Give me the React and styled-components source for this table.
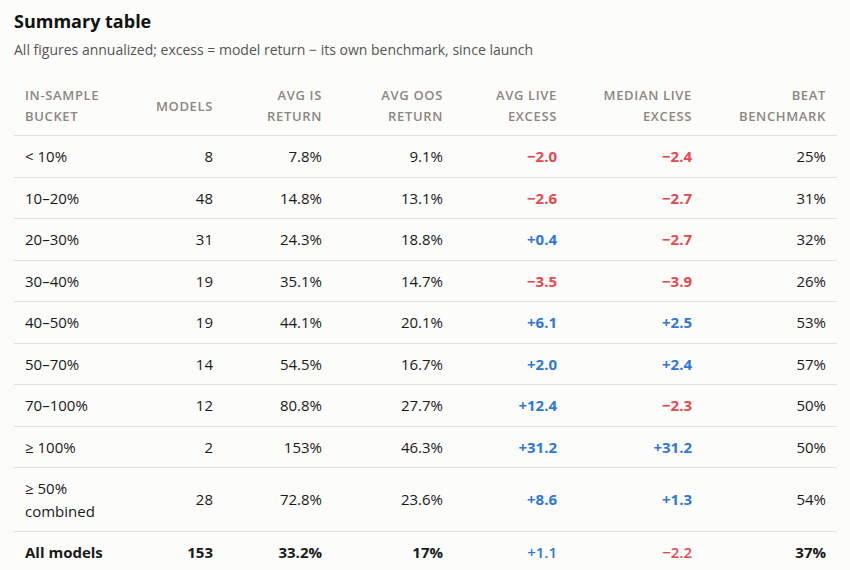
import React from 'react';
import styled, { createGlobalStyle } from 'styled-components';

const GlobalStyle = createGlobalStyle`
  html, body {
    margin: 0;
    padding: 0;
    background: #fcfcfa;
  }
  body {
    font-family: 'Open Sans', 'Noto Sans', sans-serif;
    color: #1a1a1a;
  }
`;

const rows = [
  { bucket: '< 10%', models: 8, is: '7.8%', oos: '9.1%', avg: '−2.0', med: '−2.4', beat: '25%' },
  { bucket: '10–20%', models: 48, is: '14.8%', oos: '13.1%', avg: '−2.6', med: '−2.7', beat: '31%' },
  { bucket: '20–30%', models: 31, is: '24.3%', oos: '18.8%', avg: '+0.4', med: '−2.7', beat: '32%' },
  { bucket: '30–40%', models: 19, is: '35.1%', oos: '14.7%', avg: '−3.5', med: '−3.9', beat: '26%' },
  { bucket: '40–50%', models: 19, is: '44.1%', oos: '20.1%', avg: '+6.1', med: '+2.5', beat: '53%' },
  { bucket: '50–70%', models: 14, is: '54.5%', oos: '16.7%', avg: '+2.0', med: '+2.4', beat: '57%' },
  { bucket: '70–100%', models: 12, is: '80.8%', oos: '27.7%', avg: '+12.4', med: '−2.3', beat: '50%' },
  { bucket: '≥ 100%', models: 2, is: '153%', oos: '46.3%', avg: '+31.2', med: '+31.2', beat: '50%' },
  { bucket: '≥ 50% combined', models: 28, is: '72.8%', oos: '23.6%', avg: '+8.6', med: '+1.3', beat: '54%' },
];

const total = { bucket: 'All models', models: 153, is: '33.2%', oos: '17%', avg: '+1.1', med: '−2.2', beat: '37%' };

const widths = [122, 88, 109, 121, 114, 135, 134];

const headers = [
  ['IN-SAMPLE', 'BUCKET'],
  ['MODELS'],
  ['AVG IS', 'RETURN'],
  ['AVG OOS', 'RETURN'],
  ['AVG LIVE', 'EXCESS'],
  ['MEDIAN LIVE', 'EXCESS'],
  ['BEAT', 'BENCHMARK'],
];

const Signed = ({ value, strong }) => (
  <Delta $neg={value.startsWith('−')} $strong={strong}>
    {value}
  </Delta>
);

export default function App() {
  return (
    <Page>
      <GlobalStyle />
      <Title>Summary table</Title>
      <Subtitle>
        All figures annualized; excess = model return − its own benchmark, since launch
      </Subtitle>
      <Table>
        <colgroup>
          {widths.map((w, i) => (
            <col key={i} style={{ width: w }} />
          ))}
        </colgroup>
        <thead>
          <tr>
            {headers.map((h, i) => (
              <Th key={i} $left={i === 0}>
                {h.map((line, j) => (
                  <HeadLine key={j}>{line}</HeadLine>
                ))}
              </Th>
            ))}
          </tr>
        </thead>
        <tbody>
          {rows.map((r) => (
            <Row key={r.bucket}>
              <Td $left>{r.bucket}</Td>
              <Td>{r.models}</Td>
              <Td>{r.is}</Td>
              <Td>{r.oos}</Td>
              <Td>
                <Signed value={r.avg} strong />
              </Td>
              <Td>
                <Signed value={r.med} strong />
              </Td>
              <Td>{r.beat}</Td>
            </Row>
          ))}
          <tr>
            <Td $left $bold>{total.bucket}</Td>
            <Td $bold>{total.models}</Td>
            <Td $bold>{total.is}</Td>
            <Td $bold>{total.oos}</Td>
            <Td>
              <Signed value={total.avg} />
            </Td>
            <Td>
              <Signed value={total.med} />
            </Td>
            <Td $bold>{total.beat}</Td>
          </tr>
        </tbody>
      </Table>
    </Page>
  );
}

const Page = styled.div`
  padding: 8px 14px 0 14px;
`;

const Title = styled.h2`
  margin: 0;
  font-size: 18px;
  font-weight: 700;
  line-height: 26px;
  color: #111;
`;

const Subtitle = styled.p`
  margin: 5px 0 0;
  font-size: 14px;
  line-height: 22px;
  color: #555;
`;

const Table = styled.table`
  margin-top: 15px;
  width: 823px;
  table-layout: fixed;
  border-collapse: collapse;
  font-size: 15px;
  line-height: 1.5;
`;

const Th = styled.th`
  padding: 9px 11px 8px;
  font-size: 13px;
  line-height: 21px;
  font-weight: 600;
  letter-spacing: 0.05em;
  color: #8c8782;
  text-align: ${(p) => (p.$left ? 'left' : 'right')};
  vertical-align: middle;
  border-bottom: 1px solid #e2e0da;
`;

const HeadLine = styled.div`
  white-space: nowrap;
`;

const Row = styled.tr`
  border-bottom: 1px solid #e2e0da;
  &:last-of-type {
    border-bottom: 2px solid #c6c5ba;
  }
`;

const Td = styled.td`
  padding: 9px 11px;
  text-align: ${(p) => (p.$left ? 'left' : 'right')};
  font-weight: ${(p) => (p.$bold ? 700 : 400)};
  vertical-align: middle;
`;

const Delta = styled.span`
  font-weight: ${(p) => (p.$strong ? 700 : 600)};
  color: ${(p) => (p.$neg ? '#e5484d' : '#2f78d8')};
`;
